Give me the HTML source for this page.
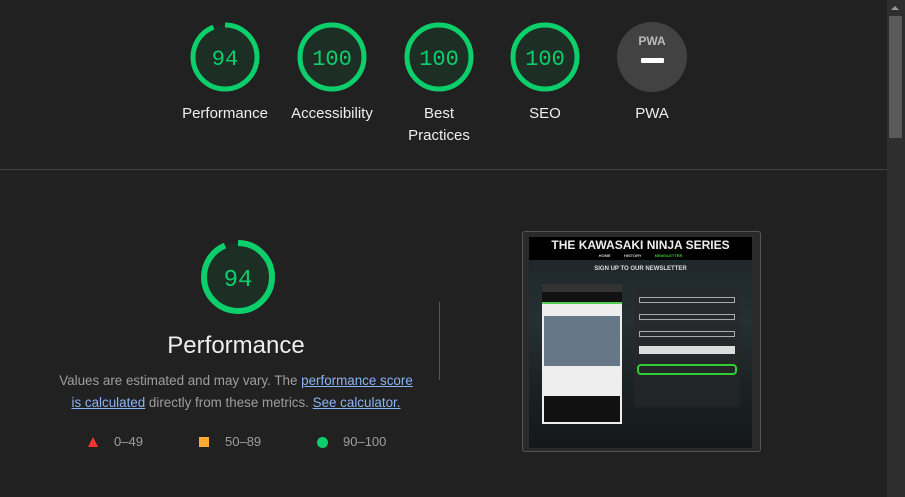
<!DOCTYPE html>
<html><head><style>
body{margin:0;width:905px;height:497px;background:#212121;overflow:hidden;position:relative;font-family:"Liberation Sans",sans-serif;}
.g{position:absolute;}
.lbl{position:absolute;width:110px;text-align:center;color:#eee;font-size:15px;line-height:22px;}
.num{font-family:"Liberation Mono",monospace;fill:#0cce6b;font-size:22px;text-anchor:middle;}
a{color:#8ab4f8;text-decoration:underline;}
</style></head><body>
<svg class="g" style="left:0;top:0" width="887" height="170">
 <g fill="#1d2f24" stroke="#0cce6b" stroke-width="5">
  <circle cx="332" cy="57" r="32"/><circle cx="439" cy="57" r="32"/><circle cx="545" cy="57" r="32"/>
  <circle cx="225" cy="57" r="32" fill="#1d2f24" stroke="none"/>
  <circle cx="225" cy="57" r="32" fill="none" stroke-dasharray="189 12" transform="rotate(-90 225 57)"/>
 </g>
 <text class="num" x="225" y="65">94</text>
 <text class="num" x="332" y="65">100</text>
 <text class="num" x="439" y="65">100</text>
 <text class="num" x="545" y="65">100</text>
 <circle cx="652" cy="57" r="35" fill="#424242"/>
 <text x="652" y="45" fill="#bbb" font-size="12" font-weight="bold" text-anchor="middle" font-family="Liberation Sans">PWA</text>
 <rect x="641" y="58" width="23" height="5" rx="1" fill="#fff"/>
 <line x1="0" y1="169.5" x2="887" y2="169.5" stroke="#444"/>
</svg>
<div class="lbl" style="left:170px;top:103px">Performance</div>
<div class="lbl" style="left:277px;top:103px">Accessibility</div>
<div class="lbl" style="left:384px;top:103px">Best<br>Practices</div>
<div class="lbl" style="left:490px;top:103px">SEO</div>
<div class="lbl" style="left:597px;top:103px">PWA</div>

<svg class="g" style="left:190px;top:230px" width="100" height="100">
 <circle cx="48" cy="47" r="34" fill="#1d2f24"/>
 <circle cx="48" cy="47" r="34" fill="none" stroke="#0cce6b" stroke-width="6" stroke-dasharray="200 14" transform="rotate(-90 48 47)"/>
 <text x="48" y="56" fill="#0cce6b" font-family="Liberation Mono" font-size="24" text-anchor="middle">94</text>
</svg>
<div style="position:absolute;left:136px;top:332px;width:200px;text-align:center;color:#eee;font-size:24px">Performance</div>
<div style="position:absolute;left:36px;top:370px;width:400px;text-align:center;color:#9e9e9e;font-size:13.4px;line-height:22px;white-space:nowrap">Values are estimated and may vary. The <a>performance score</a><br><a>is calculated</a> directly from these metrics. <a>See calculator.</a></div>
<div style="position:absolute;top:434px;left:88px;color:#9e9e9e;font-size:13px;white-space:nowrap">
 <span style="position:absolute;left:0;top:3px;width:0;height:0;border-left:5px solid transparent;border-right:5px solid transparent;border-bottom:10px solid #ff3333"></span>
 <span style="position:absolute;left:26px;top:0">0–49</span>
 <span style="position:absolute;left:111px;top:3px;width:10px;height:10px;background:#ffaa33"></span>
 <span style="position:absolute;left:137px;top:0">50–89</span>
 <span style="position:absolute;left:229px;top:3px;width:11px;height:11px;border-radius:50%;background:#0cce6b"></span>
 <span style="position:absolute;left:255px;top:0">90–100</span>
</div>
<div style="position:absolute;left:439px;top:302px;width:1px;height:78px;background:#555"></div>

<div style="position:absolute;left:522px;top:231px;width:237px;height:219px;border:1px solid #555;border-radius:3px;background:#2a2a2a">
 <div style="position:absolute;left:6px;top:5px;width:223px;height:211px;background:linear-gradient(#1c2426,#263033 40%,#1b2224 70%,#141819)">
  <div style="background:#000;height:23px;color:#eee;font-weight:bold;font-size:12px;text-align:center;line-height:16px">THE KAWASAKI NINJA SERIES<div style="font-size:4px;line-height:6px;color:#ccc">HOME &nbsp;&nbsp;&nbsp;&nbsp;&nbsp;&nbsp;&nbsp;&nbsp;&nbsp;&nbsp; HISTORY &nbsp;&nbsp;&nbsp;&nbsp;&nbsp;&nbsp;&nbsp;&nbsp;&nbsp;&nbsp; <span style="color:#3c3">NEWSLETTER</span></div></div>
  <div style="color:#ddd;font-size:6px;font-weight:bold;text-align:center;margin-top:6px">SIGN UP TO OUR NEWSLETTER</div>
  <div style="position:absolute;left:13px;top:47px;width:80px;height:140px;background:#eee">
   <div style="height:8px;background:#333"></div><div style="height:10px;background:#111;border-bottom:2px solid #5c5"></div>
   <div style="margin:12px 2px 0;height:50px;background:#678"></div>
   <div style="margin:30px 2px 0;height:26px;background:#111"></div>
  </div>
  <div style="position:absolute;left:105px;top:50px;width:106px;height:120px;background:rgba(40,40,40,.6)">
   <div style="margin:10px 5px 0;height:4px;border:1px solid #aaa"></div>
   <div style="margin:11px 5px 0;height:4px;border:1px solid #aaa"></div>
   <div style="margin:11px 5px 0;height:4px;border:1px solid #aaa"></div>
   <div style="margin:9px 5px 0;height:8px;background:#ddd"></div>
   <div style="margin:10px 3px 0;height:7px;border:2px solid #3c3;border-radius:4px"></div>
  </div>
 </div>
</div>

<div style="position:absolute;left:887px;top:0;width:18px;height:497px;background:#2e2e2e"></div>
<div style="position:absolute;left:889px;top:16px;width:13px;height:122px;background:#5a5a5a"></div>
<div style="position:absolute;left:891px;top:6px;width:0;height:0;border-left:4px solid transparent;border-right:4px solid transparent;border-bottom:4px solid #999"></div>
</body></html>
